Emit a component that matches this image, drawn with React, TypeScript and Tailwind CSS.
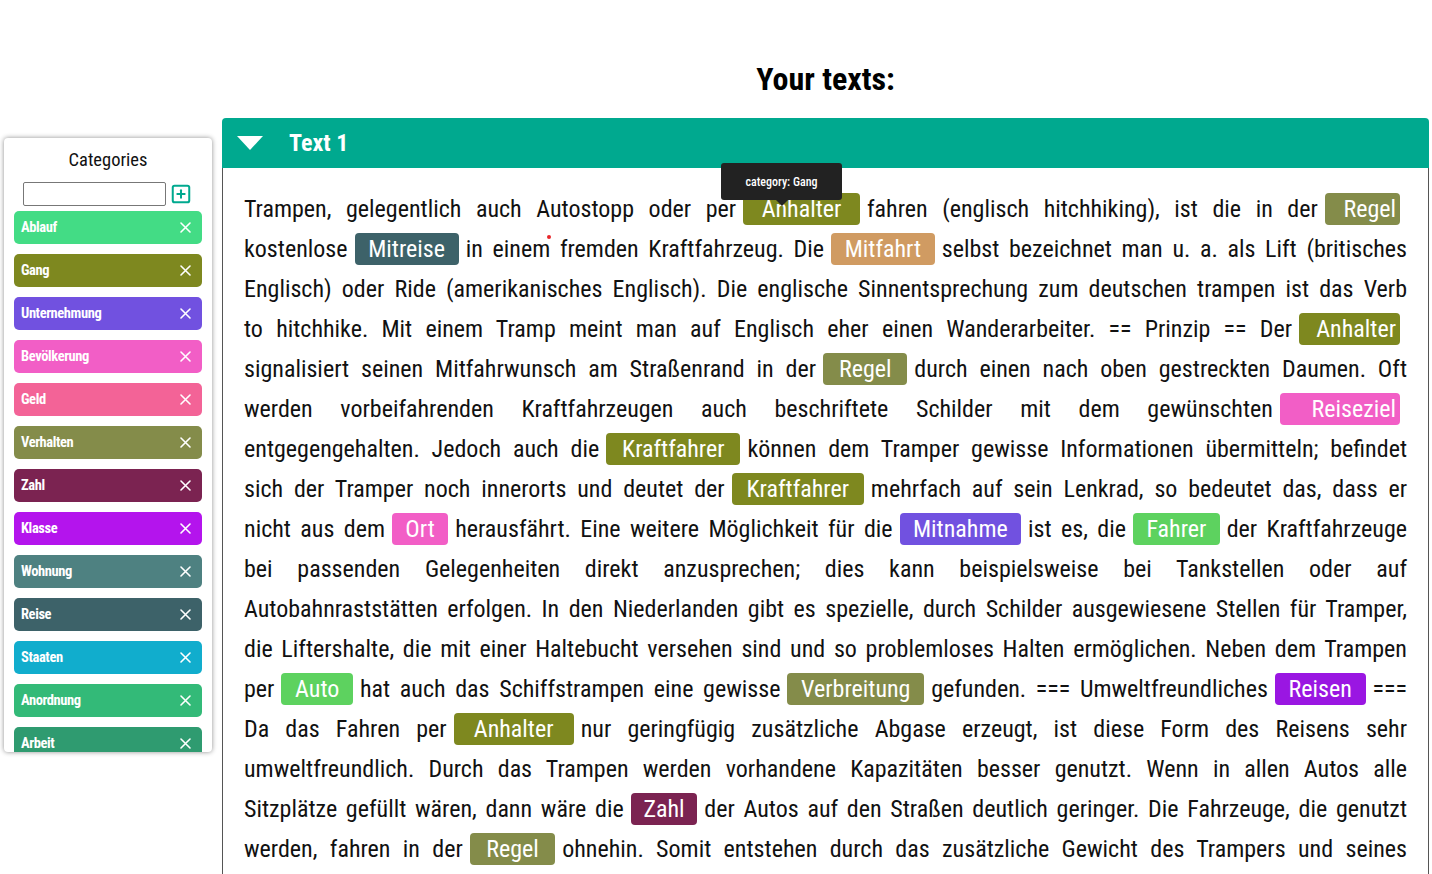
import React from 'react';
import { SquarePlus } from 'lucide-react';

const categories = [
  { name: 'Ablauf', bg: 'bg-[#43dc85]' },
  { name: 'Gang', bg: 'bg-[#7e881f]' },
  { name: 'Unternehmung', bg: 'bg-[#7151e0]' },
  { name: 'Bevölkerung', bg: 'bg-[#f25ec6]' },
  { name: 'Geld', bg: 'bg-[#f36397]' },
  { name: 'Verhalten', bg: 'bg-[#848c4a]' },
  { name: 'Zahl', bg: 'bg-[#7b2351]' },
  { name: 'Klasse', bg: 'bg-[#b414ed]' },
  { name: 'Wohnung', bg: 'bg-[#4e8181]' },
  { name: 'Reise', bg: 'bg-[#3d6269]' },
  { name: 'Staaten', bg: 'bg-[#11adcd]' },
  { name: 'Anordnung', bg: 'bg-[#33ba78]' },
  { name: 'Arbeit', bg: 'bg-[#2f9b70]' },
];

type Seg = string | { w: string; bg: string };

const gang = 'bg-[#7e881f]';
const verhalten = 'bg-[#848c4a]';
const pink = 'bg-[#f25ec6]';
const green = 'bg-[#5dd25f]';

const lines: Seg[][] = [
  ['Trampen, gelegentlich auch Autostopp oder per', { w: 'Anhalter', bg: gang }, 'fahren (englisch hitchhiking), ist die in der', { w: 'Regel', bg: verhalten }],
  ['kostenlose', { w: 'Mitreise', bg: 'bg-[#3d6269]' }, 'in einem fremden Kraftfahrzeug. Die', { w: 'Mitfahrt', bg: 'bg-[#d09b62]' }, 'selbst bezeichnet man u. a. als Lift (britisches'],
  ['Englisch) oder Ride (amerikanisches Englisch). Die englische Sinnentsprechung zum deutschen trampen ist das Verb'],
  ['to hitchhike. Mit einem Tramp meint man auf Englisch eher einen Wanderarbeiter. == Prinzip == Der', { w: 'Anhalter', bg: gang }],
  ['signalisiert seinen Mitfahrwunsch am Straßenrand in der', { w: 'Regel', bg: verhalten }, 'durch einen nach oben gestreckten Daumen. Oft'],
  ['werden vorbeifahrenden Kraftfahrzeugen auch beschriftete Schilder mit dem gewünschten', { w: 'Reiseziel', bg: pink }],
  ['entgegengehalten. Jedoch auch die', { w: 'Kraftfahrer', bg: gang }, 'können dem Tramper gewisse Informationen übermitteln; befindet'],
  ['sich der Tramper noch innerorts und deutet der', { w: 'Kraftfahrer', bg: gang }, 'mehrfach auf sein Lenkrad, so bedeutet das, dass er'],
  ['nicht aus dem', { w: 'Ort', bg: pink }, 'herausfährt. Eine weitere Möglichkeit für die', { w: 'Mitnahme', bg: 'bg-[#7151e0]' }, 'ist es, die', { w: 'Fahrer', bg: green }, 'der Kraftfahrzeuge'],
  ['bei passenden Gelegenheiten direkt anzusprechen; dies kann beispielsweise bei Tankstellen oder auf'],
  ['Autobahnraststätten erfolgen. In den Niederlanden gibt es spezielle, durch Schilder ausgewiesene Stellen für Tramper,'],
  ['die Liftershalte, die mit einer Haltebucht versehen sind und so problemloses Halten ermöglichen. Neben dem Trampen'],
  ['per', { w: 'Auto', bg: green }, 'hat auch das Schiffstrampen eine gewisse', { w: 'Verbreitung', bg: verhalten }, 'gefunden. === Umweltfreundliches', { w: 'Reisen', bg: 'bg-[#9a16e2]' }, '==='],
  ['Da das Fahren per', { w: 'Anhalter', bg: gang }, 'nur geringfügig zusätzliche Abgase erzeugt, ist diese Form des Reisens sehr'],
  ['umweltfreundlich. Durch das Trampen werden vorhandene Kapazitäten besser genutzt. Wenn in allen Autos alle'],
  ['Sitzplätze gefüllt wären, dann wäre die', { w: 'Zahl', bg: 'bg-[#7b2351]' }, 'der Autos auf den Straßen deutlich geringer. Die Fahrzeuge, die genutzt'],
  ['werden, fahren in der', { w: 'Regel', bg: verhalten }, 'ohnehin. Somit entstehen durch das zusätzliche Gewicht des Trampers und seines'],
];

const CloseIcon = () => (
  <svg width="11" height="11" viewBox="0 0 11 11" className="shrink-0">
    <path d="M1 1L10 10M10 1L1 10" stroke="white" strokeWidth="1.6" strokeLinecap="round" />
  </svg>
);

const Sidebar = () => (
  <div className="ml-1 mt-[138px] h-[614px] w-[208px] shrink-0 overflow-hidden rounded bg-white shadow-[0_0_5px_rgba(0,0,0,0.45)]">
    <div className="pt-[10px] text-center text-[18.5px] leading-6 text-[#111]">Categories</div>
    <div className="mt-[10px] flex items-center pl-[19px]">
      <input className="h-6 w-[143px] rounded-[2px] border border-[#777] bg-white outline-none" />
      <SquarePlus size={22} strokeWidth={2.2} color="#00a98f" className="ml-[4px]" />
    </div>
    <div className="mt-[5px] flex flex-col gap-[10px] px-[10px]">
      {categories.map((c) => (
        <div
          key={c.name}
          className={`flex h-[33px] w-[188px] shrink-0 items-center justify-between rounded-[5px] pl-[7px] pr-[11px] text-[14.5px] font-bold tracking-[-0.4px] text-white ${c.bg}`}
        >
          <span>{c.name}</span>
          <CloseIcon />
        </div>
      ))}
    </div>
  </div>
);

const Tag = ({ w, bg }: { w: string; bg: string }) => (
  <span className={`mx-[7px] rounded-[4px] px-1 py-[2px] text-white ${bg}`}>
    {' '}
    {w}{' '}
  </span>
);

export default function App() {
  return (
    <div className="flex min-h-[874px] items-start bg-white font-['Roboto_Condensed','Roboto',sans-serif] [font-stretch:condensed] text-[#111]">
      <Sidebar />
      <div className="ml-[10px] w-[1207px] shrink-0">
        <h1 className="mb-[19px] mt-[59px] text-center text-[32px] font-bold leading-10 text-black">Your texts:</h1>
        <div className="flex h-[50px] items-center rounded-t-[4px] bg-[#00a98f] pl-[15px]">
          <svg width="26" height="14" viewBox="0 0 26 14">
            <polygon points="0,0 26,0 13,14" fill="white" />
          </svg>
          <span className="ml-[26px] text-[24px] font-bold text-white">Text 1</span>
        </div>
        <div className="relative border-x border-[#555] px-[21px] pb-10 pt-[21px]">
          <p className="text-justify text-[24px] leading-10 [text-align-last:justify]">
            {lines.map((line, i) => (
              <React.Fragment key={i}>
                {line.map((s, j) =>
                  typeof s === 'string' ? <React.Fragment key={j}>{s}</React.Fragment> : <Tag key={j} w={s.w} bg={s.bg} />
                )}
                {i < lines.length - 1 && <br />}
              </React.Fragment>
            ))}
          </p>
          <div className="absolute left-[324px] top-[67px] h-[4px] w-[4px] rounded-full bg-[#e8262a]" />
          <div className="absolute left-[498px] top-[-5px] flex h-[37px] w-[121px] items-center justify-center rounded-[3px] bg-[#222] text-[12px] font-medium text-white">
            category: Gang
            <div className="absolute left-[55px] top-full h-0 w-0 border-x-[6px] border-t-[6px] border-x-transparent border-t-[#222]" />
          </div>
        </div>
      </div>
    </div>
  );
}
